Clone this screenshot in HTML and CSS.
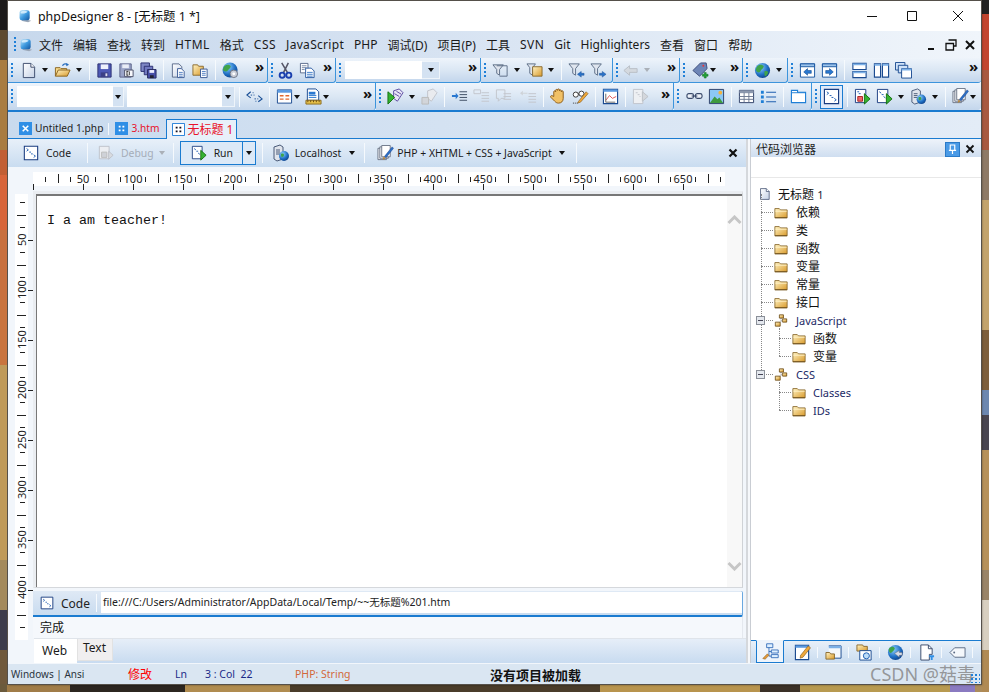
FILE: index.html
```html
<!DOCTYPE html>
<html lang="zh">
<head>
<meta charset="utf-8">
<title>phpDesigner 8</title>
<link rel="stylesheet" href="styles.css">
</head>
<body>
<svg class="defs" width="0" height="0" aria-hidden="true">
  <defs>
    <linearGradient id="gold" x1="0" y1="0" x2="1" y2="1"><stop offset="0" stop-color="#fff3c4"/><stop offset="1" stop-color="#d99a2b"/></linearGradient>
    <linearGradient id="page" x1="0" y1="0" x2="1" y2="1"><stop offset="0" stop-color="#fff"/><stop offset="1" stop-color="#c5d2e6"/></linearGradient>
    <linearGradient id="cube" x1="0" y1="0" x2="1" y2="1"><stop offset="0" stop-color="#bfe6fb"/><stop offset=".5" stop-color="#3f9be0"/><stop offset="1" stop-color="#12559f"/></linearGradient>
    <radialGradient id="earth" cx=".35" cy=".3" r=".8"><stop offset="0" stop-color="#8fd0ff"/><stop offset=".6" stop-color="#1f6fc4"/><stop offset="1" stop-color="#0c3a80"/></radialGradient>
    <symbol id="logo" viewBox="0 0 18 18"><path d="M4 15l9 2 4-2-9-2z" fill="#9aa6b6"/><rect x="2" y="1.500" width="13" height="13" rx="3" fill="url(#cube)"/><path d="M3.500 3.500c3-1.500 6-1.500 9 0-2 2-6 3-9 2z" fill="#e4f5ff" opacity=".8"/></symbol>
    <symbol id="doc" viewBox="0 0 18 18"><path d="M3.500 1.500h8l4 4v11h-12z" fill="url(#page)" stroke="#3a4a6b"/><path d="M11.500 1.500v4h4" fill="#fff" stroke="#3a4a6b"/></symbol>
    <symbol id="folderopen" viewBox="0 0 18 18"><path d="M1.500 15V6h5l1 1h6v2" fill="#f6d98a" stroke="#8a6420"/><path d="M1.500 15l3-6.500h12.500l-3 6.500z" fill="url(#gold)" stroke="#8a6420"/><path d="M9 4c1-2.500 4-2.500 5.500-1" fill="none" stroke="#2a6fc0" stroke-width="1.400"/><path d="M13 1l3 2-3 1.500z" fill="#2a6fc0"/></symbol>
    <symbol id="folder" viewBox="0 0 16 14"><path d="M1 13V2.500h5l1.500 1.500h7.500v9z" fill="url(#gold)" stroke="#8a6a30"/><path d="M1.500 5.500h13" stroke="#fff4cc"/><path d="M1 13h14" stroke="#6a4a14"/></symbol>
    <symbol id="save" viewBox="0 0 18 18"><path d="M2 2h14v14H2z" fill="#4c58b5" stroke="#2b2f70"/><path d="M5 2.500h8v5H5z" fill="#eef1fb"/><path d="M5 11h8v5H5z" fill="#3a3f86"/><path d="M10 12h2v3h-2z" fill="#dde"/></symbol>
    <symbol id="saveas" viewBox="0 0 18 18"><path d="M2 2h12v14H2z" fill="#9aa4c8" stroke="#5a6288"/><path d="M4.500 2.500h7v4h-7z" fill="#e8ecf6"/><path d="M7 8.500h9v7H7z" fill="#f7f8fc" stroke="#4a5068"/><path d="M9.500 10v4M12 10v4M9 10h2M9 14h2" stroke="#333"/></symbol>
    <symbol id="saveall" viewBox="0 0 18 18"><path d="M1 1h9v9H1z" fill="#7d86c4" stroke="#2b2f70"/><path d="M4.500 4.500h9v9h-9z" fill="#7078c0" stroke="#2b2f70"/><path d="M8 8h9v9H8z" fill="#474fa8" stroke="#24285f"/><path d="M10 8.500h5v3h-5z" fill="#eef"/><path d="M10.500 14h4v3h-4z" fill="#223"/></symbol>
    <symbol id="copydoc" viewBox="0 0 18 18"><path d="M2.500 2h7l3 3v11h-10z" fill="url(#page)" stroke="#5a6a8a"/><path d="M8 7h4l3 3v6.500H8z" fill="#fff" stroke="#3a5a96"/><path d="M9.500 11h4M9.500 13h4M9.500 15h4" stroke="#4a7ac0"/></symbol>
    <symbol id="folderdoc" viewBox="0 0 18 18"><path d="M1 14V3h5l1 1.500h5V14z" fill="url(#gold)" stroke="#8a6a30"/><path d="M9 7.500h7v9H9z" fill="#fff" stroke="#3a5a96"/><path d="M10.500 10h4M10.500 12h4M10.500 14h4" stroke="#4a7ac0"/></symbol>
    <symbol id="globe" viewBox="0 0 18 18"><circle cx="9" cy="9" r="8" fill="url(#earth)"/><path d="M4 4c2-2 5-1 6 0s-1 3-2 4-1 3-3 3-3-2-3-3 1-3 2-4zM11 10c2-1 4 0 4 1s-2 4-3 4-1-3-1-5z" fill="#3fa34a"/></symbol>
    <symbol id="globegear" viewBox="0 0 18 18"><circle cx="8.500" cy="8.500" r="8" fill="url(#earth)"/><path d="M3 4c2-2 5-1 6 0s-1 3-2 4-1 2-3 2-3-1-3-2 1-3 2-4z" fill="#3fa34a"/><circle cx="12.500" cy="12.500" r="4" fill="#c9ced8" stroke="#6c7484"/><circle cx="12.500" cy="12.500" r="1.500" fill="#fff"/></symbol>
    <symbol id="scissors" viewBox="0 0 18 18"><path d="M5 1l6 10M12 1L7 11" stroke="#556" stroke-width="1.600" fill="none"/><circle cx="5.500" cy="14" r="2.700" fill="none" stroke="#1a3fae" stroke-width="2"/><circle cx="12.500" cy="14" r="2.700" fill="none" stroke="#1a3fae" stroke-width="2"/></symbol>
    <symbol id="paste" viewBox="0 0 18 18"><path d="M1.500 1.500h8v10h-8z" fill="#fff" stroke="#5a6a8a"/><path d="M3 4h5M3 6h5M3 8h3" stroke="#7a8aa6"/><path d="M7 6.500h6l3 3v7H7z" fill="#fff" stroke="#2a5aa0"/><path d="M8.500 11h6M8.500 13h6M8.500 15h6" stroke="#3a7ac8"/></symbol>
    <symbol id="boxcheck" viewBox="0 0 18 18"><path d="M1 3h11l-4 5v6l-3-2V8z" fill="#dfe5ee" stroke="#5c6d86"/><path d="M5 4h11v11H8" fill="none" stroke="#5c6d86"/></symbol>
    <symbol id="filterfold" viewBox="0 0 18 18"><path d="M1 2h9l-3 4v8l-3-2V6z" fill="#dfe5ee" stroke="#5c6d86"/><path d="M7 5h10v10H7z" fill="url(#gold)" stroke="#8a6a30"/></symbol>
    <symbol id="filterl" viewBox="0 0 18 18"><path d="M1 2h11L8 7v7l-3-2V7z" fill="#dfe5ee" stroke="#5c6d86"/><path d="M10 13l4-3v2h3v2h-3v2z" fill="#2a72c8" stroke="#1a4f96" stroke-width=".5"/></symbol>
    <symbol id="filterr" viewBox="0 0 18 18"><path d="M1 2h11L8 7v7l-3-2V7z" fill="#dfe5ee" stroke="#5c6d86"/><path d="M17 13l-4-3v2h-3v2h3v2z" fill="#2a72c8" stroke="#1a4f96" stroke-width=".5"/></symbol>
    <symbol id="backgrey" viewBox="0 0 18 18"><path d="M2 9l6-5v3h8v4H8v3z" fill="#d4d9df" stroke="#b8bec6"/></symbol>
    <symbol id="tag" viewBox="0 0 18 18"><path d="M1 9l8-8h6l1 6-8 8z" fill="#6d85b6" stroke="#3d4d7a"/><circle cx="12" cy="4" r="1" fill="#e33"/><path d="M11 13h2v-2h2v2h2v2h-2v2h-2v-2h-2z" fill="#21a336" stroke="#0d6a1e" stroke-width=".5"/></symbol>
    <symbol id="winl" viewBox="0 0 18 18"><path d="M1.500 2h15v14h-15z" fill="#fff" stroke="#1a56a0"/><path d="M1.500 2h15v3h-15z" fill="#9cc4ec" stroke="#1a56a0"/><path d="M5 10.500l4-3.500v2h4v3H9v2z" fill="#2a78d0" stroke="#124a90" stroke-width=".6"/></symbol>
    <symbol id="winr" viewBox="0 0 18 18"><path d="M1.500 2h15v14h-15z" fill="#fff" stroke="#1a56a0"/><path d="M1.500 2h15v3h-15z" fill="#9cc4ec" stroke="#1a56a0"/><path d="M13 10.500L9 7v2H5v3h4v2z" fill="#2a78d0" stroke="#124a90" stroke-width=".6"/></symbol>
    <symbol id="splith" viewBox="0 0 18 18"><path d="M2 1.500h14v6.500H2zM2 10h14v6.500H2z" fill="#fff" stroke="#1a4a90" stroke-width="1.200"/><path d="M2 1.500h14v2H2zM2 10h14v2H2z" fill="#7cb0e6"/></symbol>
    <symbol id="splitv" viewBox="0 0 18 18"><path d="M1.500 2H8v14H1.500zM10 2h6.500v14H10z" fill="#fff" stroke="#1a4a90" stroke-width="1.200"/><path d="M1.500 2H8v2H1.500zM10 2h6.500v2H10z" fill="#7cb0e6"/></symbol>
    <symbol id="cascade" viewBox="0 0 18 18"><path d="M.5.500h10v8H.500z" fill="#cfe2f8" stroke="#1a4a90"/><path d="M3.500 3.500h10v8h-10z" fill="#cfe2f8" stroke="#1a4a90"/><path d="M7 7h10.500v10H7z" fill="#fff" stroke="#1a4a90"/><path d="M7 7h10.500v2H7z" fill="#7cb0e6"/></symbol>
    <symbol id="arrows" viewBox="0 0 18 18"><path d="M5 4L1 7.500l4 3M13 8l4 3.500-4 3" fill="none" stroke="#1a4f96" stroke-width="1.200"/><path d="M5 7.500h4M9 11.500h4M7 5h1M10 14h1" stroke="#1a4f96" stroke-dasharray="1.500 1.500"/></symbol>
    <symbol id="calwin" viewBox="0 0 18 18"><path d="M1.500 2h15v14h-15z" fill="#fff" stroke="#1a4a90"/><path d="M1.500 2h15v3h-15z" fill="#5c9ae0"/><path d="M4 7.500h4v1.500H4zM10 7.500h4v1.500h-4zM4 11h4v1.500H4zM10 11h4v1.500h-4z" fill="#e2682e"/></symbol>
    <symbol id="ruledoc" viewBox="0 0 18 18"><path d="M2.500 1h9l3 3v9h-12z" fill="#fff" stroke="#1a4a90"/><path d="M4 4h7v3H4z" fill="#2a78d0"/><path d="M4 8h8M4 10h8" stroke="#2a78d0"/><path d="M1 13h16v4H1z" fill="#e6c04a" stroke="#8a6a20"/><path d="M3 13v2M6 13v2M9 13v2M12 13v2M15 13v2" stroke="#6a4a10"/></symbol>
    <symbol id="arrowdoc" viewBox="0 0 18 18"><path d="M7 3l6-2 4 4-6 9-4-3z" fill="#e7e4f6" stroke="#5a4aa0"/><path d="M8 6l5 3M10 3.500l5 3" stroke="#5a4aa0"/><path d="M1 4l7 6-7 7z" fill="#35b331" stroke="#15700f"/></symbol>
    <symbol id="arrowdocg" viewBox="0 0 18 18"><path d="M7 3l6-2 4 4-6 9-4-3z" fill="#e9ebef" stroke="#c0c4cb"/><path d="M1 10h7v7H1z" fill="#d2d5da" stroke="#bbb"/></symbol>
    <symbol id="indent" viewBox="0 0 18 18"><path d="M9 4h8M9 7h8M9 10h8M9 13h8" stroke="#3a4a60"/><path d="M1 7.500h4V5l3 3.500-3 3.500V9.500H1z" fill="#2a78d0"/></symbol>
    <symbol id="outdent" viewBox="0 0 18 18"><path d="M9 5h8M9 8h8M9 11h8M9 14h8" stroke="#c2c6cc"/><path d="M1 2h7v4H1z" fill="none" stroke="#c2c6cc"/></symbol>
    <symbol id="comment" viewBox="0 0 18 18"><path d="M1.500 2h9v9h-4l-3 3v-3h-2z" fill="none" stroke="#c2c6cc"/><path d="M9 6h8M9 9h8M9 12h8" stroke="#c2c6cc"/></symbol>
    <symbol id="outback" viewBox="0 0 18 18"><path d="M9 6h8M9 9h8M9 12h8M9 15h8" stroke="#c2c6cc"/><path d="M8 5H3V3L0 5.500 3 8V6h5z" fill="#cfd3d8"/></symbol>
    <symbol id="hand" viewBox="0 0 18 18"><path d="M4 9V4a1 1 0 012 0V2.500a1 1 0 012 0v-.5a1 1 0 012 0v1a1 1 0 012 0v1a1 1 0 012 0v7c0 3-2 5-5 5-2 0-3-1-4-2l-4-4c-1-1 0-2 1-2z" fill="#f1c166" stroke="#8a5a1a"/></symbol>
    <symbol id="glasses" viewBox="0 0 18 18"><circle cx="4" cy="7" r="2.700" fill="#fff" stroke="#333"/><circle cx="10" cy="6" r="2.700" fill="#fff" stroke="#333"/><path d="M6.500 6.500l1-.3" stroke="#333"/><path d="M7 14L15 4l2 2-8 9-3 1z" fill="#f0a93c" stroke="#7a4f10" stroke-width=".6"/><path d="M1 16h5" stroke="#333" stroke-dasharray="1 1"/></symbol>
    <symbol id="chartwin" viewBox="0 0 18 18"><path d="M1.500 1.500h15v15h-15z" fill="#fff" stroke="#1a4a90" stroke-width="1.200"/><path d="M1.500 1.500h15v2.500h-15z" fill="#5c9ae0"/><path d="M4 13l4-5 3 3 4-2" fill="none" stroke="#d55"/><path d="M4 6v9h10" fill="none" stroke="#666"/></symbol>
    <symbol id="pagearrowg" viewBox="0 0 18 18"><path d="M1.500 1.500h10v15h-10z" fill="#eef0f3" stroke="#c0c4cb"/><path d="M11 4l6 5-6 5z" fill="#d4d7dc" stroke="#bcc0c6"/><path d="M4 5h2M6 7h2M8 9h1" stroke="#c0c4cb"/></symbol>
    <symbol id="link" viewBox="0 0 18 18"><rect x="1" y="6" width="7" height="5" rx="2" fill="#eef2f8" stroke="#3a4a6b" stroke-width="1.200"/><rect x="10" y="6" width="7" height="5" rx="2" fill="#eef2f8" stroke="#3a4a6b" stroke-width="1.200"/><path d="M6 8.500h6" stroke="#3a4a6b" stroke-width="1.200"/></symbol>
    <symbol id="picture" viewBox="0 0 18 18"><path d="M1.500 1.500h15v15h-15z" fill="#8cc8f4" stroke="#2c3e66"/><circle cx="13" cy="5" r="2" fill="#f5b13a"/><path d="M2 16l5-7 3 3 2-2 4 6z" fill="#3e9a3e"/></symbol>
    <symbol id="table" viewBox="0 0 18 18"><path d="M1.500 2.500h15v13h-15z" fill="#fff" stroke="#2c3e66"/><path d="M1.500 2.500h15v3h-15z" fill="#8c98ae"/><path d="M1.500 9h15M1.500 12h15M6.500 5v10M11.500 5v10" stroke="#6c7890"/></symbol>
    <symbol id="list" viewBox="0 0 18 18"><path d="M1 3h3v3H1zM1 8h3v3H1zM1 13h3v3H1z" fill="#1f7fd6"/><path d="M6.500 4.500H17M6.500 9.500H17M6.500 14.500H17" stroke="#1f5fb0" stroke-width="1.200"/></symbol>
    <symbol id="tabbox" viewBox="0 0 18 18"><path d="M1.500 2.500H8v2h8.500v11h-15z" fill="#fff" stroke="#1f7fd6" stroke-width="1.200"/><path d="M2 5h14" stroke="#1f7fd6"/></symbol>
    <symbol id="code" viewBox="0 0 18 18"><path d="M1.500 1.500h15v15h-15z" fill="#fff" stroke="#1a3c80" stroke-width="1.200"/><path d="M4 4l2 1.500-2 1.500M7 8h2M9 10h2M12 11l2 1.500-2 1.500" fill="none" stroke="#1a5ab0"/></symbol>
    <symbol id="runcheck" viewBox="0 0 18 18"><path d="M1.500 1.500h11v14h-11z" fill="#fff" stroke="#1a3c80"/><path d="M3.500 4h2M5 6h2" stroke="#1a5ab0"/><path d="M4 9h5v5H4z" fill="#e66" stroke="#a22"/><path d="M11 6l6 5.500-6 5.500z" fill="#35b331" stroke="#15700f"/></symbol>
    <symbol id="run" viewBox="0 0 18 18"><path d="M1.500 1.500h11v14h-11z" fill="#fff" stroke="#1a3c80"/><path d="M3.500 4l2 1.500M6 7h2M8 9l2 1.500" stroke="#1a5ab0"/><path d="M11 6l6 5.500-6 5.500z" fill="#35b331" stroke="#15700f"/></symbol>
    <symbol id="rung" viewBox="0 0 18 18"><path d="M1.500 1.500h11v14h-11z" fill="#eceef2" stroke="#bcc0c8"/><path d="M4 8h6v6H4z" fill="#cfd2d8" stroke="#bbb"/><path d="M12 7l5 4.500-5 4.500z" fill="#d8dbe0" stroke="#bcc0c8"/></symbol>
    <symbol id="server" viewBox="0 0 18 18"><path d="M2 3l6-2 3 2v12l-6 2-3-2z" fill="#dfe4ec" stroke="#4a5a78"/><path d="M4 6h4M4 8h4M4 10h4" stroke="#4a5a78"/><circle cx="12" cy="12" r="5" fill="url(#earth)"/><path d="M9 10c2-1 3 0 3 1s-1 2-2 2-1-2-1-3z" fill="#3fa34a"/></symbol>
    <symbol id="pens" viewBox="0 0 18 18"><path d="M1 3.500h9v12H1z" fill="#f4f5f8" stroke="#6a7486"/><path d="M3 2h9v12H3z" fill="#f8f9fb" stroke="#6a7486"/><path d="M5 .500h9v12H5z" fill="#fff" stroke="#6a7486"/><path d="M8 12L16 2l1.500 1.500-8 10z" fill="#2a6fc8" stroke="#123a80" stroke-width=".5"/><path d="M7 12l2 2-3 2z" fill="#b8873a"/></symbol>
    <symbol id="xdoc" viewBox="0 0 14 14"><path d="M0 0h14v14H0z" fill="#2f8fe6"/><path d="M4 4l6 6M10 4l-6 6" stroke="#fff" stroke-width="1.700"/></symbol>
    <symbol id="webtab" viewBox="0 0 14 14"><path d="M0 0h14v14H0z" fill="#2f8fe6"/><path d="M4 4h2v2H4zM8 4h2v2H8zM4 8h2v2H4zM8 8h2v2H8z" fill="#fff"/></symbol>
    <symbol id="webtab2" viewBox="0 0 14 14"><path d="M.500.500h13v13H.500z" fill="#fff" stroke="#1a78d6"/><path d="M4 4h2v2H4zM8 4h2v2H8zM4 8h2v2H4zM8 8h2v2H8z" fill="#112"/></symbol>
    <symbol id="nodes" viewBox="0 0 16 16"><path d="M6 1h5v4H6z" fill="url(#gold)" stroke="#6a4a14"/><path d="M10 6h5v4h-5z" fill="url(#gold)" stroke="#6a4a14"/><path d="M1 10h6v5H1z" fill="url(#gold)" stroke="#6a4a14"/><path d="M8 5v3M7 10l2-2" stroke="#555" stroke-dasharray="1 1"/></symbol>
    <symbol id="treeic" viewBox="0 0 22 22"><path d="M6 1h8v5H6zM12 9h9v4h-9zM12 15h9v4h-9z" fill="#dff0ff" stroke="#1a5ab0"/><path d="M9 6v11h3M9 11h3" stroke="#1a5ab0" fill="none"/><path d="M1 20l6-6 2 2-5 5z" fill="#e49a3a" stroke="#7a4f10" stroke-width=".6"/></symbol>
    <symbol id="penwin" viewBox="0 0 18 18"><path d="M1.500 1.500h14v15h-14z" fill="#fff" stroke="#1a4a90" stroke-width="1.200"/><path d="M1.500 1.500h14v2.500h-14z" fill="#5c9ae0"/><path d="M7 12L15 2l2.500 2-8 10-3 1z" fill="#f0a93c" stroke="#7a4f10" stroke-width=".6"/></symbol>
    <symbol id="foldwin" viewBox="0 0 18 18"><path d="M4 2h13v13H4" fill="#f4f8fc" stroke="#1a4a90"/><path d="M4 2h13v2.500H4z" fill="#7cb0e6"/><path d="M1 9h4l1 1.500h4V16H1z" fill="url(#gold)" stroke="#8a6a30"/></symbol>
    <symbol id="foldclock" viewBox="0 0 18 18"><path d="M1 1h6l1 1.500h4v5H1z" fill="url(#gold)" stroke="#8a6a30"/><path d="M4 7h12v10H4z" fill="#fff" stroke="#1a4a90"/><circle cx="11" cy="12.500" r="3.200" fill="#bcdcf8" stroke="#1a5ab0"/></symbol>
    <symbol id="globearrow" viewBox="0 0 18 18"><circle cx="9" cy="9" r="8" fill="url(#earth)"/><path d="M3 4c2-2 4-1 5 0s-1 3-2 4-2 2-3 1-2-4 0-5z" fill="#3fa34a"/><path d="M8 10l5-3v2h3v3h-3v2z" fill="#d5dce6" stroke="#667" stroke-width=".5"/></symbol>
    <symbol id="docb" viewBox="0 0 18 18"><path d="M3 1h8l4 4v6h-3v6H3z" fill="#fff" stroke="#3a4a6b"/><path d="M11 1v4h4" fill="none" stroke="#3a4a6b"/><path d="M12 12h5v2h-1.500v3h-2v-3H12z" fill="#2f8fe6"/></symbol>
    <symbol id="tagw" viewBox="0 0 18 18"><path d="M1 9l5-5h11v10H6z" fill="#f4f7fb" stroke="#5a6a84"/><circle cx="5.500" cy="9" r="1" fill="#5a6a84"/></symbol>
  </defs>
</svg>

<div class="window">
  <header class="titlebar">
    <svg class="logo"><use href="#logo"/></svg>
    <span class="title">phpDesigner 8 - [无标题 1 *]</span>
    <div class="wincontrols">
      <svg class="winbtn" viewBox="0 0 12 12"><path d="M1 6.500h10" stroke="#111"/></svg>
      <svg class="winbtn" viewBox="0 0 12 12"><path d="M1.500 1.500h9v9h-9z" fill="none" stroke="#111"/></svg>
      <svg class="winbtn" viewBox="0 0 12 12"><path d="M1 1l10 10M11 1L1 11" stroke="#111"/></svg>
    </div>
  </header>

  <nav class="menubar">
    <span class="grip"></span>
    <svg class="menulogo"><use href="#logo"/></svg>
    <span>文件</span><span>编辑</span><span>查找</span><span>转到</span><span class="ls">HTML</span><span>格式</span><span class="ls">CSS</span><span class="ls3">JavaScript</span><span>PHP</span><span>调试(D)</span><span>项目(P)</span><span>工具</span><span class="ls">SVN</span><span>Git</span><span>Highlighters</span><span>查看</span><span>窗口</span><span>帮助</span>
    <div class="mdi">
      <svg class="mdibtn" viewBox="0 0 12 12"><path d="M2 9h6v2H2z" fill="#111"/></svg>
      <svg class="mdibtn" viewBox="0 0 12 12"><path d="M3.500 1h7.500v6H9M1 4.500h7.500V11H1z" fill="none" stroke="#111" stroke-width="1.300"/></svg>
      <svg class="mdibtn" viewBox="0 0 12 12"><path d="M2 2l8 8M10 2l-8 8" stroke="#111" stroke-width="2"/></svg>
    </div>
  </nav>

  <div class="tbrow r1">
    <div class="grp w259"><span class="grip"></span>
      <i class="i m3"><svg><use href="#doc"/></svg></i><b class="a"></b>
      <i class="i"><svg><use href="#folderopen"/></svg></i><b class="a"></b><u class="s"></u>
      <i class="i"><svg><use href="#save"/></svg></i><i class="i"><svg><use href="#saveas"/></svg></i><i class="i"><svg><use href="#saveall"/></svg></i><u class="s"></u>
      <i class="i"><svg><use href="#copydoc"/></svg></i><i class="i"><svg><use href="#folderdoc"/></svg></i><u class="s"></u>
      <i class="i"><svg><use href="#globegear"/></svg></i><em class="more">»</em></div>
    <div class="grp w68"><span class="grip"></span>
      <i class="i"><svg><use href="#scissors"/></svg></i><i class="i"><svg><use href="#paste"/></svg></i><em class="more">»</em></div>
    <div class="grp w145"><span class="grip"></span>
      <span class="combo m3 c77"></span><span class="cbtn c18"><b class="a tiny"></b></span><em class="more">»</em></div>
    <div class="grp w132"><span class="grip"></span>
      <i class="i m2"><svg><use href="#boxcheck"/></svg></i><b class="a"></b>
      <i class="i"><svg><use href="#filterfold"/></svg></i><b class="a"></b><u class="s"></u>
      <i class="i"><svg><use href="#filterl"/></svg></i><i class="i"><svg><use href="#filterr"/></svg></i></div>
    <div class="grp w67"><span class="grip"></span>
      <i class="i"><svg><use href="#backgrey"/></svg></i><b class="a off"></b><em class="more">»</em></div>
    <div class="grp w63"><span class="grip"></span>
      <i class="i m3"><svg><use href="#tag"/></svg></i><b class="a nar"></b><em class="more">»</em></div>
    <div class="grp w45"><span class="grip"></span>
      <i class="i m2"><svg><use href="#globe"/></svg></i><b class="a"></b></div>
    <div class="grp grow"><span class="grip"></span>
      <i class="i m2"><svg><use href="#winl"/></svg></i><i class="i"><svg><use href="#winr"/></svg></i><u class="s"></u>
      <i class="i"><svg><use href="#splith"/></svg></i><i class="i"><svg><use href="#splitv"/></svg></i><i class="i"><svg><use href="#cascade"/></svg></i><em class="more">»</em></div>
  </div>

  <div class="tbrow r2">
    <div class="grp w368"><span class="grip"></span>
      <span class="combo m3 c96"></span><span class="cbtn c11"><b class="a tiny"></b></span>
      <span class="combo m3 c95"></span><span class="cbtn c13"><b class="a tiny"></b></span><u class="s"></u>
      <i class="i"><svg><use href="#arrows"/></svg></i><u class="s"></u>
      <i class="i"><svg><use href="#calwin"/></svg></i><b class="a nar"></b>
      <i class="i m3"><svg><use href="#ruledoc"/></svg></i><b class="a nar"></b><em class="more">»</em></div>
    <div class="grp w298"><span class="grip"></span>
      <i class="i m2"><svg><use href="#arrowdoc"/></svg></i><b class="a"></b>
      <i class="i"><svg><use href="#arrowdocg"/></svg></i><u class="s"></u>
      <i class="i"><svg><use href="#indent"/></svg></i><i class="i"><svg><use href="#outdent"/></svg></i><i class="i"><svg><use href="#comment"/></svg></i><i class="i m3"><svg><use href="#outback"/></svg></i><u class="s"></u>
      <i class="i"><svg><use href="#hand"/></svg></i><i class="i"><svg><use href="#glasses"/></svg></i><u class="s"></u>
      <i class="i"><svg><use href="#chartwin"/></svg></i><u class="s"></u>
      <i class="i"><svg><use href="#pagearrowg"/></svg></i><em class="more">»</em></div>
    <div class="grp w138"><span class="grip"></span>
      <i class="i m3"><svg><use href="#link"/></svg></i><i class="i"><svg><use href="#picture"/></svg></i><u class="s"></u>
      <i class="i"><svg><use href="#table"/></svg></i><i class="i"><svg><use href="#list"/></svg></i><u class="s"></u>
      <i class="i"><svg><use href="#tabbox"/></svg></i></div>
    <div class="grp grow"><span class="grip"></span>
      <i class="i m2 sel"><svg><use href="#code"/></svg></i><u class="s"></u>
      <i class="i"><svg><use href="#runcheck"/></svg></i><i class="i"><svg><use href="#run"/></svg></i><b class="a"></b>
      <i class="i"><svg><use href="#server"/></svg></i><b class="a"></b><u class="s"></u>
      <i class="i"><svg><use href="#pens"/></svg></i><b class="a nar"></b></div>
  </div>

  <div class="tabs">
    <span class="tab"><svg class="tabic"><use href="#xdoc"/></svg>Untitled 1.php</span><u class="tabsep"></u>
    <span class="tab red"><svg class="tabic"><use href="#webtab"/></svg>3.htm</span>
    <span class="tab active"><svg class="tabic"><use href="#webtab2"/></svg><span class="tabtxt">无标题 1</span></span>
  </div>

  <div class="main">
    <section class="left">
      <div class="doctb">
        <span class="dbtn d-code"><svg><use href="#code"/></svg><span>Code</span></span><u class="ds s-a"></u>
        <span class="dbtn d-debug off"><svg><use href="#rung"/></svg><span>Debug</span><b class="a off"></b></span><u class="ds s-b"></u>
        <span class="runbox"><span class="dbtn d-run"><svg><use href="#run"/></svg><span>Run</span></span><span class="rundrop"><b class="a tiny"></b></span></span><u class="ds s-c"></u>
        <span class="dbtn d-local"><svg><use href="#server"/></svg><span>Localhost</span><b class="a"></b></span><u class="ds s-d"></u>
        <span class="dbtn d-lang"><svg><use href="#pens"/></svg><span>PHP + XHTML + CSS + JavaScript</span><b class="a"></b></span><u class="ds s-e"></u>
        <svg class="docclose" viewBox="0 0 10 10"><path d="M1.500 1.500l7 7M8.500 1.500l-7 7" stroke="#111" stroke-width="2.200"/></svg>
      </div>
      <div class="work">
        <div class="vruler">
          <span></span><span>50</span><span>100</span><span>150</span><span>200</span><span>250</span><span>300</span><span>350</span><span>400</span>
        </div>
        <div class="workmain">
          <div class="hruler">
            <span>50</span><span>100</span><span>150</span><span>200</span><span>250</span><span>300</span><span>350</span><span>400</span><span>450</span><span>500</span><span>550</span><span>600</span><span>650</span>
          </div>
          <div class="editor">
            <div class="code">I a am teacher!</div>
            <div class="vscroll">
              <svg viewBox="0 0 14 10"><path d="M1 8l6-6 6 6" fill="none" stroke="#c6c6c6" stroke-width="3"/></svg>
              <svg viewBox="0 0 14 10"><path d="M1 2l6 6 6-6" fill="none" stroke="#c6c6c6" stroke-width="3"/></svg>
            </div>
          </div>
          <div class="addr">
            <svg class="addric"><use href="#code"/></svg><span class="addrlabel">Code</span><u class="addrsep"></u>
            <span class="addrinput">file:///C:/Users/Administrator/AppData/Local/Temp/~~无标题%201.htm</span>
          </div>
          <div class="done">完成</div>
          <div class="btabs"><span class="btab on">Web</span><span class="btab">Text</span></div>
        </div>
      </div>
    </section>
    <div class="sash"></div>
    <aside class="right">
      <div class="phead"><span class="ptitle">代码浏览器</span>
        <span class="pin"><svg viewBox="0 0 10 12"><path d="M2.500 1h5v6h-5zM1 7h8M5 7v4" fill="none" stroke="#fff" stroke-width="1.300"/></svg></span>
        <svg class="pclose" viewBox="0 0 10 10"><path d="M1.500 1.500l7 7M8.500 1.500l-7 7" stroke="#111" stroke-width="1.800"/></svg>
      </div>
      <div class="psearch"></div>
      <div class="tree">
        <div class="node root"><svg class="nic doc"><use href="#doc"/></svg><span>无标题 <small>1</small></span></div>
        <div class="node l1"><svg class="nic"><use href="#folder"/></svg><span>依赖</span></div>
        <div class="node l1"><svg class="nic"><use href="#folder"/></svg><span>类</span></div>
        <div class="node l1"><svg class="nic"><use href="#folder"/></svg><span>函数</span></div>
        <div class="node l1"><svg class="nic"><use href="#folder"/></svg><span>变量</span></div>
        <div class="node l1"><svg class="nic"><use href="#folder"/></svg><span>常量</span></div>
        <div class="node l1"><svg class="nic"><use href="#folder"/></svg><span>接口</span></div>
        <div class="node l1 tog"><b class="minus"></b><svg class="nic"><use href="#nodes"/></svg><span class="lat">JavaScript</span></div>
        <div class="node l2"><svg class="nic"><use href="#folder"/></svg><span>函数</span></div>
        <div class="node l2"><svg class="nic"><use href="#folder"/></svg><span>变量</span></div>
        <div class="node l1 tog"><b class="minus"></b><svg class="nic"><use href="#nodes"/></svg><span class="lat">CSS</span></div>
        <div class="node l2"><svg class="nic"><use href="#folder"/></svg><span class="lat">Classes</span></div>
        <div class="node l2"><svg class="nic"><use href="#folder"/></svg><span class="lat">IDs</span></div>
        <i class="vline v1"></i><i class="vline v2"></i><i class="vline v3"></i>
      </div>
      <div class="ptabs">
        <span class="ptab on"><svg><use href="#treeic"/></svg></span>
        <span class="ptab"><svg><use href="#penwin"/></svg></span><u class="psep"></u>
        <span class="ptab"><svg><use href="#foldwin"/></svg></span><u class="psep"></u>
        <span class="ptab"><svg><use href="#foldclock"/></svg></span><u class="psep"></u>
        <span class="ptab"><svg><use href="#globearrow"/></svg></span><u class="psep"></u>
        <span class="ptab"><svg><use href="#docb"/></svg></span><u class="psep"></u>
        <span class="ptab"><svg><use href="#tagw"/></svg></span><u class="psep"></u>
      </div>
    </aside>
  </div>

  <footer class="status">
    <span class="st-enc">Windows | Ansi</span>
    <span class="st-mod">修改</span>
    <span class="st-ln">Ln</span>
    <span class="st-col">3 : Col&nbsp;&nbsp;22</span>
    <span class="st-php">PHP: String</span>
    <span class="st-proj">没有项目被加载</span>
    <span class="st-wm">CSDN @菇毒</span>
    <span class="st-grip"></span>
  </footer>
</div>
</body>
</html>
```
FILE: styles.css
```css
* { box-sizing: border-box; }
html, body { margin: 0; height: 100%; }
body {
  width: 989px;
  height: 692px;
  overflow: hidden;
  font-family: "Noto Sans", "Noto Sans CJK SC", sans-serif;
  font-size: 12px;
  color: #1a1a1a;
  background-color: #5a4630;
  background-image:
    linear-gradient(180deg, #1c1a1a 0 30px, #5d4a30 30px 60px, #a97c40 60px 150px, #c25f34 150px 175px, #d8653a 175px 230px, #c8703e 230px 300px, #c9743e 300px 365px, #bf9a5a 365px 560px, #a48a5c 560px 610px, #3c3c4c 610px 650px, #70593c 650px 684px, #6b5a3c 684px),
    linear-gradient(180deg, #222 0 14px, #c24630 14px 70px, #a85a40 70px 150px, #8e7a66 150px 200px, #c2a36c 200px 330px, #7e5f3c 330px 390px, #6d88b0 390px 415px, #4a4650 415px 450px, #b6915a 450px 570px, #9a8468 570px 600px, #d8cfc0 600px 650px, #b08a54 650px),
    linear-gradient(90deg, #a07c48 0 70px, #2c2620 70px 185px, #b08c50 185px 290px, #4a3c2a 290px 600px, #b8944e 600px 760px, #3a3026 760px 800px, #b89a50 800px 950px, #8a7ac0 950px 975px, #ab8c5c 975px);
  background-size: 7px 100%, 7px 100%, 100% 8px;
  background-position: 0 0, 100% 0, 0 100%;
  background-repeat: no-repeat;
}
.defs { position: absolute; }
.window {
  margin: 1px 0 0 8px;
  width: 973px;
  height: 683px;
  display: flex;
  flex-direction: column;
  background: #fff;
  box-shadow: 0 0 0 1px #55504a, 1px 1px 2px rgba(0,0,0,.4);
}

/* title bar */
.titlebar { height: 30px; flex: none; display: flex; align-items: center; padding-left: 10px; background: #fff; }
.logo { width: 14px; height: 14px; }
.title { margin-left: 6px; font-size: 12.4px; color: #111; }
.wincontrols { margin-left: auto; display: flex; }
.winbtn { width: 12px; height: 12px; margin-right: 34px; }
.winbtn:last-child { margin-right: 17px; }
.wincontrols .winbtn:first-child { margin-right: 28px; }

/* menu */
.menubar {
  height: 27px;
  flex: none;
  display: flex;
  align-items: center;
  gap: 10px;
  padding-left: 3px;
  background: linear-gradient(90deg, #c7d8ec 0, #d7e3f2 45%, #f0f5fb 100%);
  font-size: 12px;
}
.menubar > span:not(.grip) { white-space: nowrap; }
.ls { letter-spacing: .5px; }
.ls3 { letter-spacing: .3px; }
.menulogo { width: 14px; height: 14px; flex: none; margin-left: -8px; margin-right: -4px; }
.grip {
  display: block;
  flex: none;
  width: 6px;
  height: 15px;
  background-image: linear-gradient(#1f80d8 2px, transparent 2px);
  background-size: 2px 4px;
  background-repeat: repeat-y;
  background-position: 3px 0;
}
.mdi { margin-left: auto; display: flex; gap: 7px; padding-right: 5px; align-items: center; }
.mdibtn { width: 12px; height: 12px; }

/* toolbars */
.tbrow { display: flex; flex: none; }
.r1 { height: 25px; }
.r2 { height: 29px; border-bottom: 2px solid #1a7bd0; }
.grp {
  display: flex;
  align-items: center;
  flex: none;
  height: 100%;
  background: linear-gradient(180deg, #eef4fb 0, #dbe7f4 50%, #c3d6ec 100%);
  border-right: 1px solid #3c94dc;
  border-bottom: 1px solid #3c94dc;
  border-radius: 0 0 3px 0;
}
.r2 .grp { border-bottom: 0; }
.grow { flex: 1; border-right: 0; }
.w259 { width: 260px; }
.w68 { width: 68px; }
.w145 { width: 145px; }
.w132 { width: 132px; }
.w67 { width: 67px; }
.w63 { width: 63px; }
.w45 { width: 45px; }
.w368 { width: 368px; }
.w298 { width: 298px; }
.w138 { width: 138px; }
.i { width: 22px; height: 18px; flex: none; display: flex; align-items: center; justify-content: center; font-style: normal; }
.i svg { width: 17px; height: 17px; }
.m2 { margin-left: 2px; }
.m3 { margin-left: 3px; }
.a { width: 12px; flex: none; display: flex; justify-content: center; align-items: center; }
.a::before { content: ""; border: 3.5px solid transparent; border-top: 4px solid #111; border-bottom: 0; }
.a.off::before { border-top-color: #aab0b8; }
.a.nar { width: 4px; }
.a.tiny { width: 100%; }
.s { display: block; flex: none; width: 8px; height: 20px; text-decoration: none; background: linear-gradient(#f6fafd, #f6fafd) center / 1px 100% no-repeat; }
.more { margin-left: auto; margin-right: 2px; width: 10px; font: bold 15px/14px "Noto Sans", sans-serif; color: #111; transform: translateY(-4px); white-space: nowrap; }
.combo { display: block; flex: none; height: 18px; background: #fff; }
.c77 { width: 77px; }
.c96 { width: 96px; height: 21px; }
.c95 { width: 95px; height: 21px; }
.cbtn { display: flex; flex: none; height: 18px; align-items: center; background: #d4e2f2; border: 1px solid #eef4fa; border-left: 0; }
.r2 .cbtn { height: 21px; }
.c18 { width: 18px; }
.c11 { width: 11px; }
.c13 { width: 13px; }
.sel { width: 23px; height: 24px; border: 1px solid #1a7bd0; background: #dfeafa; }

/* doc tabs */
.tabs {
  height: 27px;
  flex: none;
  display: flex;
  align-items: flex-end;
  padding-left: 10px;
  background: linear-gradient(90deg, #c8daee, #e3ecf7);
  border-bottom: 1px solid #1a7bd0;
}
.tab { display: flex; align-items: center; height: 19px; padding-bottom: 1px; font-size: 10.2px; color: #222; white-space: nowrap; }
.tabic { width: 13px; height: 13px; margin-right: 3px; flex: none; }
.tab:first-child { margin-left: 1px; }
.tabsep { display: block; width: 1px; height: 12px; margin: 0 6px 3px 5px; background: #f4f8fc; text-decoration: none; }
.red { color: #e8132a; }
.active {
  margin-left: 7px;
  width: 71px;
  height: 20px;
  margin-bottom: -1px;
  padding-left: 5px;
  background: #e8f0f9;
  border: 1px solid #1a7bd0;
  border-bottom: 0;
  color: #e8132a;
  font-size: 12px;
}
.active .tabic { margin-right: 2px; }

/* main */
.main { flex: 1; min-height: 0; display: flex; }
.left { width: 738px; display: flex; flex-direction: column; }
.doctb {
  height: 28px;
  flex: none;
  display: flex;
  align-items: center;
  background: linear-gradient(180deg, #e8f0f9, #c9dcf0);
  font-size: 10.4px;
}
.dbtn { display: flex; align-items: center; flex: none; }
.dbtn svg { width: 16px; height: 16px; flex: none; }
.dbtn.off { color: #a5adb8; }
.d-code { margin-left: 15px; width: 64px; }
.d-code svg { margin-right: 7px; }
.d-debug { margin-left: 5px; }
.d-debug svg { margin-right: 7px; }
.d-debug .a { margin-left: 2px; }
.ds { display: block; flex: none; width: 1px; height: 20px; background: #f5f9fd; text-decoration: none; }
.s-a { margin-right: 5px; }
.s-b { margin-left: 5px; margin-right: 6px; }
.s-c { margin-left: 6px; margin-right: 9px; }
.s-d { margin-left: 6px; margin-right: 12px; }
.s-e { margin-left: 8px; }
.runbox { display: flex; flex: none; height: 24px; border: 1px solid #1a7bd0; background: #dce9f7; }
.d-run { width: 62px; padding-left: 10px; border-right: 1px solid #1a7bd0; }
.d-run svg { margin-right: 7px; }
.rundrop { width: 12px; display: flex; align-items: center; }
.dbtn.d-local svg { margin-right: 5px; width: 18px; height: 18px; }
.d-local .a { margin-left: 5px; }
.dbtn.d-lang svg { margin-right: 3px; width: 17px; height: 17px; }
.d-lang .a { margin-left: 4px; }
.docclose { margin-left: auto; margin-right: 8px; width: 10px; height: 10px; }

.work { flex: 1; min-height: 0; display: flex; background: #f2f6fb; }
.vruler {
  width: 25px;
  flex: none;
  margin-top: 27px;
  margin-bottom: 23px;
  padding-left: 7px;
  display: flex;
  flex-direction: column;
  background-image:
    linear-gradient(#222 1px, transparent 1px),
    linear-gradient(#222 1px, transparent 1px),
    linear-gradient(#222 1px, transparent 1px),
    linear-gradient(#fff, #fff);
  background-size: 9px 50px, 5px 25px, 5px 50px, 13px 100%;
  background-position: 9px 21px, 12px 8px, 20px 46px, 7px 0;
  background-repeat: repeat-y, repeat-y, repeat-y, no-repeat;
}
.vruler span {
  height: 50px;
  flex: none;
  width: 13px;
  writing-mode: vertical-rl;
  transform: rotate(180deg);
  text-align: center;
  font-size: 11px;
  line-height: 13px;
  color: #222;
  white-space: nowrap;
  display: flex;
  align-items: center;
  justify-content: center;
}
.vruler span:first-child { height: 21px; }
.workmain { flex: 1; min-width: 0; display: flex; flex-direction: column; }
.hruler {
  margin-top: 5px;
  width: 692px;
  height: 18px;
  flex: none;
  padding-left: 25px;
  display: flex;
  background-image:
    linear-gradient(90deg, #222 1px, transparent 1px),
    linear-gradient(90deg, #222 1px, transparent 1px),
    linear-gradient(90deg, #222 1px, transparent 1px),
    linear-gradient(#fff, #fff);
  background-size: 50px 9px, 25px 5px, 50px 6px, 100% 14px;
  background-position: 25px 2px, 12px 5px, 50px 12px, 0 0;
  background-repeat: repeat-x, repeat-x, repeat-x, no-repeat;
}
.hruler span {
  width: 50px;
  height: 14px;
  flex: none;
  font-size: 11px;
  line-height: 14px;
  color: #222;
  display: flex;
  justify-content: center;
}
.editor {
  margin-top: 1px;
  height: 397px;
  flex: none;
  width: 710px;
  display: flex;
  border: 3px solid #eaedf1;
  border-right: 1px solid #cfd2d6;
  border-bottom: 1px solid #d5d8dc;
  background: #fff;
  box-shadow: inset 1px 2px 0 #777;
}
.code { flex: 1; padding: 17px 0 0 11px; font: 13.33px/20px "Liberation Mono", monospace; color: #111; }
.vscroll { width: 15px; flex: none; display: flex; flex-direction: column; justify-content: space-between; padding: 19px 0 16px; background: #f8f8f8; margin-top: 2px; }
.vscroll svg { width: 15px; height: 10px; }
.addr {
  margin-top: 3px;
  width: 710px;
  height: 26px;
  flex: none;
  display: flex;
  align-items: center;
  background: linear-gradient(180deg, #dfe9f5, #c9dcf0);
  border-bottom: 2px solid #1a7bd0;
  border-right: 1px solid #6aa8e0;
  border-radius: 0 2px 2px 0;
  padding-left: 7px;
}
.addric { width: 14px; height: 14px; flex: none; }
.addrlabel { margin-left: 7px; font-size: 12px; color: #222; }
.addrsep { display: block; width: 1px; height: 18px; margin: 0 4px 0 6px; background: #f5f9fd; }
.addrinput { flex: 1; height: 21px; margin-bottom: 1px; padding-left: 2px; background: #fff; font-size: 10.5px; line-height: 21px; white-space: nowrap; color: #222; }
.done { width: 710px; height: 21px; padding: 1px 0 0 7px; background: #f5f8fc; border-right: 1px solid #e4e8ee; font-size: 12px; color: #111; flex: none; }
.btabs { display: flex; flex: 1; margin-left: 1px; background: linear-gradient(180deg, #e6eef8, #c8dbf0); align-items: flex-start; border-top: 1px solid #dfe4ea; }
.btab { height: 22px; font-size: 12px; line-height: 17px; background: #f0eff0; border: 1px solid #e2e2e2; border-top: 0; }
.btab.on { width: 43px; height: 24px; padding: 2px 0 0 8px; line-height: 19px; background: #fff; border: 0; }
.btab:not(.on) { width: 36px; padding-left: 5px; }

.sash { width: 5px; flex: none; background: linear-gradient(90deg, #d5d8dc 0 2px, #f6f8fb 2px 4px, #c9cdd3 4px 5px); }
.right { flex: 1; min-width: 0; display: flex; flex-direction: column; background: #fff; }
.phead {
  height: 18px;
  flex: none;
  display: flex;
  align-items: flex-end;
  padding-left: 5px;
  background: linear-gradient(180deg, #eef3fa, #cfdef0);
  font-size: 12px;
  color: #222;
}
.ptitle { line-height: 14px; }
.pin { margin-left: auto; margin-right: 2px; width: 15px; height: 15px; background: #4a9ae6; border: 1px solid #2a7ac8; display: flex; align-items: center; justify-content: center; }
.pin svg { width: 9px; height: 11px; }
.pclose { width: 10px; height: 10px; margin: 0 6px 3px 3px; }
.psearch { height: 21px; flex: none; border-bottom: 1px solid #e8e8e8; }
.tree { flex: 1; min-height: 0; position: relative; padding: 7px 0 0 7px; font-size: 12px; color: #111; }
.node { height: 18px; display: flex; align-items: center; position: relative; white-space: nowrap; }
.nic { width: 14px; height: 13px; flex: none; margin-right: 7px; }
.nic.doc { width: 13px; height: 16px; }
.root small { font-size: 11px; color: #223; }
.l1 { padding-left: 16px; }
.l1 .nic { margin-right: 8px; }
.l2 { padding-left: 34px; }
.l1::before, .l2::before { content: ""; position: absolute; top: 9px; border-top: 1px dotted #888; }
.l1::before { left: 3px; width: 12px; }
.l2::before { left: 21px; width: 12px; }
.lat { font-size: 11px; color: #1c2a66; }
.minus { position: absolute; left: -2px; top: 5px; width: 9px; height: 9px; background: #e4e8ee linear-gradient(#445, #445) center / 5px 1px no-repeat; border: 1px solid #8a8f98; z-index: 1; }
.vline { position: absolute; border-left: 1px dotted #888; }
.v1 { left: 10px; top: 16px; height: 180px; }
.v2 { left: 28px; top: 150px; height: 28px; }
.v3 { left: 28px; top: 204px; height: 28px; }
.ptabs {
  height: 23px;
  flex: none;
  display: flex;
  align-items: center;
  padding-left: 5px;
  background: linear-gradient(180deg, #e8f0f9, #c9dcf0);
  border-top: 1px solid #1a7bd0;
}
.ptab { display: flex; align-items: center; justify-content: center; width: 26px; height: 22px; flex: none; }
.ptab.on { width: 28px; height: 23px; margin-top: -1px; background: #eef4fb; border: 1px solid #1a7bd0; border-top-color: #eef4fb; margin-right: 5px; }
.ptab svg { width: 17px; height: 17px; }
.psep { display: block; width: 1px; height: 11px; margin: 0 2px; background: #f5f9fd; }

/* status bar */
.status {
  height: 21px;
  flex: none;
  position: relative;
  display: flex;
  align-items: center;
  padding-left: 3px;
  background: #dae6f2;
  border-top: 1px solid #f2f6fb;
  font-size: 11px;
  white-space: nowrap;
}
.st-enc { width: 117px; color: #2a3440; font-size: 10px; }
.st-mod { width: 47px; color: #f00; font-size: 12px; }
.st-ln { width: 30px; color: #1c2a88; font-size: 10.5px; }
.st-col { width: 90px; color: #1c2a88; font-size: 10.5px; }
.st-php { width: 195px; color: #d2683a; font-size: 10.5px; }
.st-proj { font-weight: 700; font-size: 13px; color: #111; }
.st-wm { position: absolute; right: 6px; top: 0; font-size: 18px; line-height: 20px; color: rgba(130,130,130,.8); }
.st-grip { position: absolute; right: 1px; bottom: 1px; width: 10px; height: 10px; background-image: radial-gradient(#1f80d8 1px, transparent 1.2px); background-size: 4px 4px; }
```
